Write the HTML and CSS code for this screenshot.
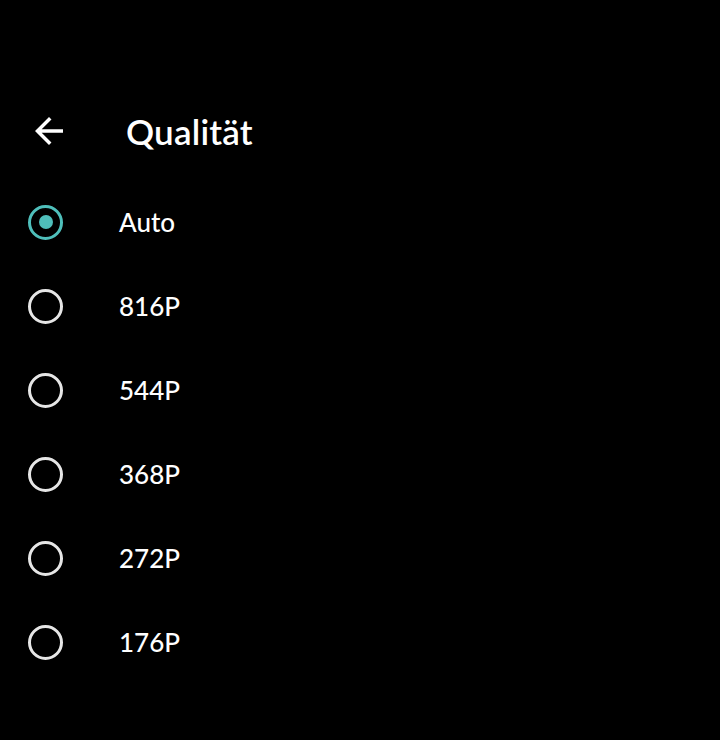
FILE: index.html
```html
<!DOCTYPE html>
<html>
<head>
<meta charset="utf-8">
<link rel="stylesheet" href="styles.css">
</head>
<body>
<div class="screen">
  <header class="toolbar">
    <span class="back">
      <svg width="42" height="42" viewBox="0 0 24 24"><path d="M20 11H7.83l5.59-5.59L12 4l-8 8 8 8 1.41-1.41L7.83 13H20v-2z" fill="#fff"/></svg>
    </span>
    <h1 class="title">Qualität</h1>
  </header>
  <ul class="options">
    <li class="option checked"><span class="radio"></span><span class="label">Auto</span></li>
    <li class="option"><span class="radio"></span><span class="label">816P</span></li>
    <li class="option"><span class="radio"></span><span class="label">544P</span></li>
    <li class="option"><span class="radio"></span><span class="label">368P</span></li>
    <li class="option"><span class="radio"></span><span class="label">272P</span></li>
    <li class="option"><span class="radio"></span><span class="label">176P</span></li>
  </ul>
</div>
</body>
</html>
```
FILE: styles.css
```css
html, body {
  margin: 0;
  padding: 0;
  background: #000;
}
.screen {
  width: 720px;
  height: 740px;
  overflow: hidden;
  box-sizing: border-box;
  padding-top: 99px;
  background: #000;
  color: #fff;
  font-family: Lato, "Noto Sans", sans-serif;
}
.toolbar {
  display: flex;
  align-items: center;
  height: 64px;
  padding-left: 28px;
}
.back {
  display: flex;
  width: 42px;
  height: 42px;
}
.title {
  margin: 0 0 0 56px;
  font-size: 35px;
  font-weight: 600;
  letter-spacing: 0.2px;
}
.options {
  list-style: none;
  margin: 17px 0 0 0;
  padding: 0;
}
.option {
  display: flex;
  align-items: center;
  height: 84px;
  padding-left: 28px;
}
.radio {
  box-sizing: border-box;
  width: 35px;
  height: 35px;
  border-radius: 50%;
  border: 3.5px solid #e6e6e6;
  display: flex;
  align-items: center;
  justify-content: center;
}
.option.checked .radio {
  border-color: #4fbfbb;
}
.option.checked .radio::after {
  content: "";
  width: 14px;
  height: 14px;
  border-radius: 50%;
  background: #4fbfbb;
}
.label {
  margin-left: 56px;
  font-size: 26px;
  font-weight: 500;
}
```
